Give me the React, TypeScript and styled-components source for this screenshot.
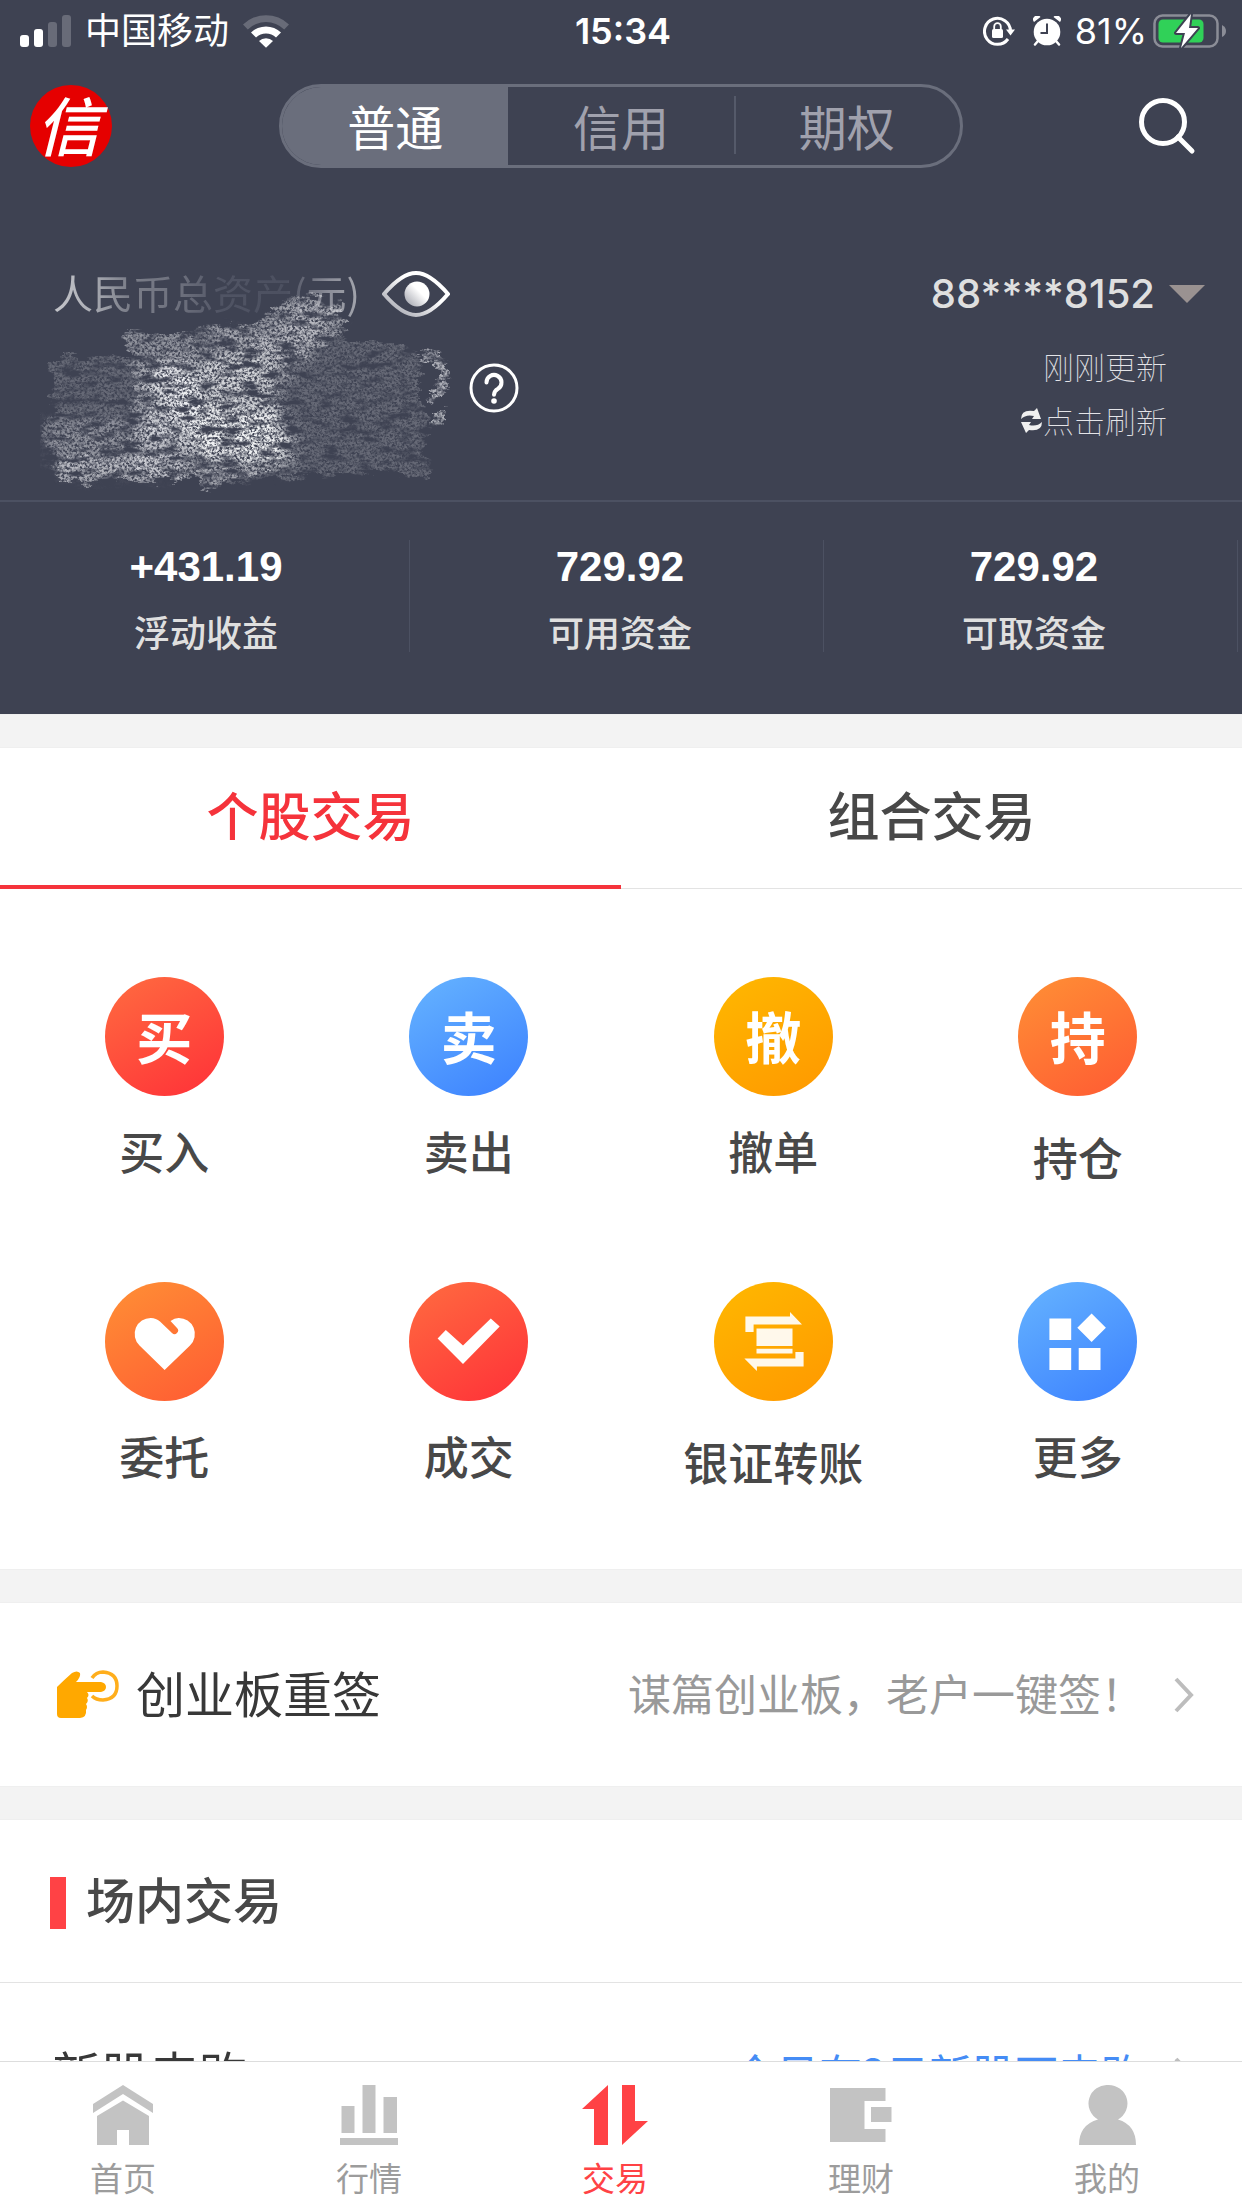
import React, { useState } from "react";
import styled, { createGlobalStyle, css } from "styled-components";

const color = {
  night: "#3e4252",
  nightLine: "#4c5162",
  pill: "#6a6e7c",
  red: "#f5333b",
  brand: "#ff4245",
  ink: "#484848",
  mute: "#999999",
  icon: "#c3c3c3",
  line: "#e3e3e3",
  band: "#f3f3f3",
  blue: "#458cf5",
};

const Global = createGlobalStyle`
  *, *::before, *::after { box-sizing: border-box; }
  html, body { margin: 0; background: #fff; }
  body { font-family: "Noto Sans CJK SC", sans-serif; color: ${color.ink}; }
  button { margin: 0; padding: 0; border: 0; background: none; color: inherit; font: inherit; cursor: pointer; }
  a { color: inherit; text-decoration: none; }
  h2, p, dl, dd, dt { margin: 0; }
  svg { display: block; flex: none; }
`;

const Shell = styled.div`
  display: flex;
  flex-direction: column;
  height: 100vh;
  overflow: hidden;
`;

const Content = styled.main`
  flex: 1;
  min-height: 0;
  overflow-y: auto;
  scrollbar-width: none;
`;

const Top = styled.header`
  background: ${color.night};
  color: #fff;
`;

/* status bar */

const StatusBar = styled.div`
  display: grid;
  grid-template-columns: 1fr auto 1fr;
  align-items: center;
  height: 62px;
  padding: 0 16px 0 20px;
  font-family: Inter, "Noto Sans CJK SC", sans-serif;
  font-size: 36px;
  line-height: 48px;
`;

const StatusSide = styled.div<{ $end?: boolean }>`
  display: flex;
  align-items: center;
  gap: ${(p) => (p.$end ? 6 : 14)}px;
  justify-content: ${(p) => (p.$end ? "flex-end" : "flex-start")};
`;

const StatusIcons = styled.span`
  display: flex;
  align-items: center;
  gap: 18px;
  margin-right: 8px;
`;

const Clock = styled.time`
  font-weight: 600;
`;

/* toolbar */

const Toolbar = styled.div`
  display: grid;
  grid-template-columns: 1fr 55vw 1fr;
  align-items: center;
  padding: 22px 30px 0;
`;

const Logo = styled.a`
  display: flex;
  align-items: center;
  justify-content: center;
  width: 82px;
  height: 82px;
  padding: 0 6px 6px 0;
  border-radius: 50%;
  background: #e50000;
  font-size: 64px;
  line-height: 76px;
  font-style: italic;
  font-weight: 500;
`;

const Segments = styled.div`
  display: grid;
  grid-template-columns: repeat(3, 1fr);
  height: 84px;
  border: 3px solid ${color.pill};
  border-radius: 42px;
  overflow: hidden;
`;

const Segment = styled.button<{ $active: boolean }>`
  display: flex;
  align-items: center;
  justify-content: center;
  padding-bottom: 2px;
  font-size: 48px;
  line-height: 56px;
  color: ${(p) => (p.$active ? "#fff" : "#a0a1ad")};
  background: ${(p) => (p.$active ? color.pill : "none")};

  & + &::before {
    content: "";
    width: 2px;
    height: 58px;
    margin-right: auto;
    background: #555a6a;
  }
  & + &::after {
    content: "";
    width: 2px;
    margin-left: auto;
  }
`;

const SearchButton = styled.button`
  justify-self: end;
  padding-right: 16px;
`;

/* account summary */

const Account = styled.section`
  position: relative;
  display: flex;
  justify-content: space-between;
  padding: 102px 37px 53px 53px;
  border-bottom: 2px solid ${color.nightLine};
`;

const Assets = styled.div`
  display: flex;
  flex-direction: column;
  gap: 45px;
`;

const AssetsTitle = styled.div`
  display: flex;
  align-items: center;
  gap: 22px;
  height: 48px;
  font-size: 40px;
  line-height: 48px;
`;

const FadedText = styled.span`
  padding-bottom: 5px;
  color: transparent;
  background: linear-gradient(
    90deg,
    #c4c5ca 0,
    #aeb0b7 12%,
    #7c7f8a 24%,
    #6c6f7c 42%,
    #505464 55%,
    #4c5060 76%,
    #8c8e99 90%,
    #a4a6ae 100%
  );
  background-clip: text;
  -webkit-background-clip: text;
`;

const HelpButton = styled.button`
  align-self: flex-end;
  margin-right: -69px;
`;

const Scribble = styled.svg`
  position: absolute;
  left: 40px;
  top: 102px;
  pointer-events: none;
`;

const AccountSide = styled.div`
  display: flex;
  flex-direction: column;
  align-items: flex-end;
`;

const AccountPicker = styled.button`
  display: flex;
  align-items: center;
  gap: 14px;
  margin-bottom: 21px;
  font-family: Inter, sans-serif;
  font-size: 40px;
  line-height: 48px;
  font-weight: 500;
  color: #dfdfdf;
`;

const Refresh = styled.div`
  display: flex;
  align-items: center;
  margin-right: 38px;
  font-size: 31px;
  line-height: 54px;
  font-weight: 100;
  color: #e4e4e8;
`;

const RefreshButton = styled(Refresh).attrs({ as: "button" })``;

const Stats = styled.dl`
  display: grid;
  grid-template-columns: repeat(3, 1fr);
  padding: 38px 0 62px;
`;

const Stat = styled.div`
  display: flex;
  flex-direction: column-reverse;
  gap: 19px;
  margin-right: 4px;
  padding: 0 0 2px 3px;
  border-right: 1px solid ${color.nightLine};
  text-align: center;
`;

const StatValue = styled.dd`
  font-family: "Liberation Sans", Arial, sans-serif;
  font-size: 42px;
  line-height: 53px;
  font-weight: 700;
`;

const StatLabel = styled.dt`
  font-size: 36px;
  line-height: 38px;
  font-weight: 500;
  color: #dfdfdf;
`;

/* body */

const Band = styled.div`
  height: 34px;
  background: ${color.band};
  border: solid #efefef;
  border-width: 1px 0;
`;

const Tabs = styled.div`
  display: grid;
  grid-template-columns: repeat(2, 1fr);
`;

const Tab = styled.button<{ $active: boolean }>`
  height: 141px;
  padding-bottom: 8px;
  border-bottom: 1px solid ${color.line};
  font-size: 52px;
  line-height: 60px;
  font-weight: 500;
  ${(p) =>
    p.$active &&
    css`
      padding-bottom: 5px;
      color: ${color.red};
      border-bottom: 4px solid ${color.red};
    `}
`;

const Shortcuts = styled.nav`
  display: grid;
  grid-template-columns: repeat(4, 1fr);
  gap: 86px 0;
  padding: 88px 12px 68px;
`;

const Shortcut = styled.a<{ $spaced?: boolean }>`
  display: flex;
  flex-direction: column;
  align-items: center;
  gap: ${(p) => (p.$spaced ? 33 : 27)}px;
  height: 219px;
  font-size: 45px;
  line-height: 56px;
  font-weight: 500;
  white-space: nowrap;
`;

const tones = {
  red: "#ff6c40, #ff3038",
  blue: "#66b4ff, #3b80ff",
  yellow: "#ffb800, #ff9800",
  orange: "#ff9035, #ff5a33",
};

type Tone = keyof typeof tones;

const Disc = styled.span<{ $tone: Tone }>`
  display: flex;
  align-items: center;
  justify-content: center;
  width: 119px;
  height: 119px;
  border-radius: 50%;
  background: linear-gradient(150deg, ${(p) => tones[p.$tone]});
  color: #fff;
`;

const DiscText = styled.span`
  padding-bottom: 4px;
  font-size: 56px;
  line-height: 64px;
  font-weight: 700;
`;

const Row = styled.a`
  display: flex;
  align-items: center;
  height: 183px;
  padding: 0 48px 0 52px;
`;

const RowTitle = styled.span`
  padding-bottom: 6px;
  font-size: 49px;
  line-height: 60px;
  color: #383838;

  svg + & {
    margin-left: 14px;
  }
`;

const RowNote = styled.span<{ $link?: boolean }>`
  margin-left: auto;
  margin-right: 30px;
  padding-bottom: 6px;
  font-size: 43px;
  line-height: 60px;
  color: ${(p) => (p.$link ? color.blue : color.mute)};
`;

const SectionHead = styled.div`
  display: flex;
  align-items: center;
  gap: 20px;
  height: 163px;
  padding: 4px 50px 0;
  border-bottom: 1px solid ${color.line};

  &::before {
    content: "";
    width: 16px;
    height: 52px;
    background: ${color.brand};
  }
`;

const SectionTitle = styled.h2`
  padding-bottom: 10px;
  font-size: 49px;
  line-height: 60px;
  font-weight: 500;
`;

/* bottom navigation */

const BottomNav = styled.nav`
  display: grid;
  grid-template-columns: repeat(5, 1fr);
  height: 147px;
  padding-right: 12px;
  border-top: 1px solid #dddddd;
  background: #fff;
`;

const NavItem = styled.a<{ $active?: boolean }>`
  display: flex;
  flex-direction: column;
  align-items: center;
  gap: 11px;
  padding-top: 23px;
  font-size: 33px;
  line-height: 42px;
  color: ${(p) => (p.$active ? color.brand : "#9c9c9c")};

  svg {
    fill: ${(p) => (p.$active ? color.brand : color.icon)};
  }
`;

const SignalIcon = () => (
  <svg width="51" height="32" viewBox="0 0 51 32" fill="#fff" aria-hidden="true">
    <rect x="0" y="20" width="9" height="12" rx="3" />
    <rect x="14" y="14" width="9" height="18" rx="3" />
    <rect x="28" y="7" width="9" height="25" rx="3" opacity=".22" />
    <rect x="42" y="0" width="9" height="32" rx="3" opacity=".22" />
  </svg>
);

const WifiIcon = () => (
  <svg width="46" height="34" viewBox="0 0 46 34" aria-hidden="true">
    <path d="M0 10.500a33 33 0 0 1 46 0l-4.800 5a26 26 0 0 0-36.400 0z" fill="#fff" opacity=".22" />
    <path d="M8 18.500a21.500 21.500 0 0 1 30 0l-5 5a14.500 14.500 0 0 0-20 0z" fill="#fff" />
    <path d="M16 27a10 10 0 0 1 14 0l-7 6.800z" fill="#fff" />
  </svg>
);

const LockIcon = () => (
  <svg width="32" height="30" viewBox="0 0 32 30" aria-hidden="true">
    <path d="M27.500 15A13 13 0 1 0 25 23" fill="none" stroke="#fff" strokeWidth="3" />
    <path d="M23 13.500h9l-4.500 6z" fill="#fff" />
    <rect x="9" y="13" width="11" height="9" rx="1.500" fill="#fff" />
    <path d="M11.200 13.500v-3a3.300 3.300 0 0 1 6.600 0v3" fill="none" stroke="#fff" strokeWidth="1.800" />
  </svg>
);

const AlarmIcon = () => (
  <svg width="28" height="30" viewBox="0 0 28 30" aria-hidden="true">
    <g stroke="#fff" strokeWidth="2.500" strokeLinecap="round">
      <path d="M5 25l-3 3.500M23 25l3 3.500" />
    </g>
    <path d="M1 6a4 4 0 0 1 6.500-5zM27 6a4 4 0 0 0-6.500-5z" fill="#fff" />
    <circle cx="14" cy="16" r="13.300" fill="#fff" />
    <path d="M14 7.500v9.500H7.500" fill="none" stroke={color.night} strokeWidth="2" />
  </svg>
);

const BatteryIcon = () => (
  <svg width="73" height="36" viewBox="0 0 73 36" aria-hidden="true">
    <rect x="1.500" y="2.500" width="63" height="31" rx="8" fill="none" stroke="#8b8d97" strokeWidth="2.500" />
    <path d="M69 12q4 2 4 6t-4 6z" fill="#8b8d97" />
    <rect x="5.500" y="6.500" width="45" height="23" rx="4.500" fill="#30d158" />
    <path
      d="M38 1L23 20h9l-4 15 17-20h-9z"
      fill="#fff"
      stroke={color.night}
      strokeWidth="4"
      strokeLinejoin="round"
      paintOrder="stroke"
    />
  </svg>
);

const SearchIcon = () => (
  <svg width="58" height="58" viewBox="0 0 58 58" fill="none" stroke="#fff" strokeWidth="5" strokeLinecap="round" aria-hidden="true">
    <circle cx="25" cy="25" r="21.500" />
    <path d="M40 40l14 14" />
  </svg>
);

const EyeIcon = () => (
  <svg width="68" height="46" viewBox="0 0 68 46" aria-hidden="true">
    <defs>
      <linearGradient id="eyeLine" x1="0" y1="1" x2="1" y2="0">
        <stop offset="0" stopColor="#9a9ca6" />
        <stop offset=".6" stopColor="#fff" />
      </linearGradient>
    </defs>
    <path
      d="M2 23Q20 2 34 2t32 21Q48 44 34 44T2 23z"
      fill="none"
      stroke="url(#eyeLine)"
      strokeWidth="4"
      strokeLinejoin="round"
    />
    <circle cx="35" cy="23" r="12.500" fill="url(#eyeLine)" />
  </svg>
);

const HelpIcon = () => (
  <svg width="50" height="50" viewBox="0 0 50 50" fill="none" stroke="#fff" aria-hidden="true">
    <circle cx="25" cy="25" r="23" strokeWidth="3" />
    <path d="M17.500 19.500a7.500 7.500 0 1 1 11.500 6.300q-4 2.400-4 6" strokeWidth="4" strokeLinecap="round" />
    <circle cx="25" cy="38" r="2.800" fill="#fff" stroke="none" />
  </svg>
);

const RefreshIcon = () => (
  <svg width="23" height="25" viewBox="0 0 23 25" fill="#f0f0f0" aria-hidden="true">
    <path d="M1 11Q1 1 14 3l3-3 4 11h-9l2-3Q6 6 1 11z" />
    <path d="M22 14q0 10-13 8l-3 3L1 14h10l-2 3q8 2 13-3z" />
  </svg>
);

const CaretIcon = () => (
  <svg width="36" height="18" viewBox="0 0 36 18" aria-hidden="true">
    <path d="M0 0h36L18 18z" fill="#9a9291" />
  </svg>
);

const ScribbleMask = () => (
  <Scribble width="420" height="228" viewBox="0 0 420 228" aria-hidden="true">
    <defs>
      <filter id="chalk" x="-5%" y="-5%" width="110%" height="110%">
        <feTurbulence type="fractalNoise" baseFrequency=".05 .14" numOctaves="4" seed="3" result="waves" />
        <feTurbulence type="fractalNoise" baseFrequency=".4" numOctaves="4" seed="7" result="grain" />
        <feDisplacementMap in="SourceGraphic" in2="waves" scale="20" xChannelSelector="R" yChannelSelector="G" result="rough" />
        <feColorMatrix in="grain" type="matrix" values="0 0 0 0 1  0 0 0 0 1  0 0 0 0 1  3 0 0 0 -.850" result="speck" />
        <feColorMatrix in="waves" type="matrix" values="0 0 0 0 1  0 0 0 0 1  0 0 0 0 1  0 0 3.500 0 -.900" result="patches" />
        <feComposite in="rough" in2="speck" operator="in" result="chalked" />
        <feComposite in="chalked" in2="patches" operator="in" />
      </filter>
      <filter id="melt">
        <feGaussianBlur stdDeviation="7" />
      </filter>
    </defs>
    <g filter="url(#chalk)" fill="#f4f5f7">
      <path d="M10 88h80v-25h66l2-8h55l40-28 46 4 5 42h56l20 16v40l10 30-8 18 10 30-64-6-75 6-85 10-8-8H17L6 180 1 148h14z" opacity=".22" />
      <path d="M86 63h68v20l8 40-12 88-56-6V110z" opacity=".3" />
      <path d="M156 56h55l42-30 46 6 4 30-54 30z" opacity=".3" />
      <path d="M17 186h130v25H17z" opacity=".4" />
      <path d="M156 198l80-4-62 24-14 2z" opacity=".4" />
      <g filter="url(#melt)">
        <path d="M160 66h60l40-30 36 6-30 46-24 24-60 30-20-40z" opacity=".4" />
        <path d="M6 150h124v54H17L6 180z" opacity=".3" />
        <path d="M104 96l80-10 46-4 10 54 15 34-4 28-87-8-58-20z" opacity=".6" />
        <path d="M150 138l82 4 14 30-5 20-84-4z" opacity=".95" />
        <path d="M110 100h44l14 50-34 6z" opacity=".8" />
      </g>
      <path d="M390 141h17v12h-17z" opacity=".6" />
      <path d="M380 85q24 0 24 20 0 14-16 22" fill="none" stroke="#e9eaee" strokeWidth="11" opacity=".65" />
    </g>
  </Scribble>
);

const HeartGlyph = () => (
  <svg width="119" height="119" viewBox="0 0 119 119" fill="#fff" aria-hidden="true">
    <path d="M59.600 88L34.500 63.500A16 16 0 0 1 46 36q5 0 9 3.500L67 51a3 3 0 0 0 5-5l-6.500-7q4-3 8-3A16 16 0 0 1 85 63.500z" />
  </svg>
);

const CheckGlyph = () => (
  <svg width="119" height="119" viewBox="0 0 119 119" fill="#fff" aria-hidden="true">
    <path d="M28.600 56.400l8.200-8.500L54 63.600l27.800-27.200 8.900 8.200L54 82z" />
  </svg>
);

const TransferGlyph = () => (
  <svg width="119" height="119" viewBox="0 0 119 119" fill="#fff" fillOpacity=".92" aria-hidden="true">
    <path d="M31.400 34.600H76V30l12 12.500H39.600V50h-8.200z" />
    <path d="M42.500 46.400h36V64h-36zM42.500 66.800h36v4.600h-36z" />
    <path d="M30.400 76.400h51V70h8.200v14.600H42.900V89z" />
  </svg>
);

const MoreGlyph = () => (
  <svg width="119" height="119" viewBox="0 0 119 119" fill="#fff" aria-hidden="true">
    <path d="M31.400 36.400h21.800v21.500H31.400zM31.400 66h21.800v21.900H31.400zM60.700 66h21.800v21.900H60.700zM73.600 31.400l14.300 14.300L73.600 60 59.300 45.700z" />
  </svg>
);

const PointerIcon = () => (
  <svg width="70" height="50" viewBox="0 0 70 50" aria-hidden="true">
    <path
      d="M5 17Q12 10 20 3q5-3 8 0 1 4-4 9h25q5 1 5 5t-5 5H35q3 3 0 6 2 3-1 6 2 3 0 6 1 7-6 8H9q-4 0-4-4z"
      fill="#ffa800"
    />
    <path d="M40 8q4-6 11-6 14 1 14 14T51 30q-7 0-11-4" fill="none" stroke="#ffae1c" strokeWidth="3.500" />
  </svg>
);

const ChevronIcon = () => (
  <svg width="20" height="36" viewBox="0 0 20 36" fill="none" stroke="#bdbdbd" strokeWidth="4" aria-hidden="true">
    <path d="M2 2l15 16L2 34" />
  </svg>
);

const HomeIcon = () => (
  <svg width="60" height="60" viewBox="0 0 60 60" aria-hidden="true">
    <path d="M0 19L30 0l30 19v9L30 9 0 28z" />
    <path d="M4 31l26-15.500L56 31v29H36V45H24v15H4z" />
  </svg>
);

const ChartIcon = () => (
  <svg width="58" height="60" viewBox="0 0 58 60" aria-hidden="true">
    <path d="M1.500 21h13v27h-13zM22.500 0h13v48h-13zM43.500 12H57v36H43.500zM0 53h58v7H0z" />
  </svg>
);

const TradeIcon = () => (
  <svg width="66" height="60" viewBox="0 0 66 60" aria-hidden="true">
    <path d="M0 24L26 0v60H12V24zM40 0h13v36h13L40 60z" />
  </svg>
);

const WalletIcon = () => (
  <svg width="62" height="60" viewBox="0 0 62 60" aria-hidden="true">
    <path d="M0 3h55.500v13h-21v28h21v13H0zM41 22h20.500v15H41z" />
  </svg>
);

const PersonIcon = () => (
  <svg width="57" height="60" viewBox="0 0 57 60" aria-hidden="true">
    <path d="M29.500 0a19 18.500 0 0 1 9.500 34.500Q57 40 57 60H0q0-20 19-25.500A19 18.500 0 0 1 29.500 0z" />
  </svg>
);

const segments = ["普通", "信用", "期权"];
const tabs = ["个股交易", "组合交易"];

const stats = [
  { label: "浮动收益", value: "+431.19" },
  { label: "可用资金", value: "729.92" },
  { label: "可取资金", value: "729.92" },
];

const shortcuts: { label: string; tone: Tone; glyph: React.ReactNode; spaced?: boolean }[] = [
  { label: "买入", tone: "red", glyph: <DiscText>买</DiscText> },
  { label: "卖出", tone: "blue", glyph: <DiscText>卖</DiscText> },
  { label: "撤单", tone: "yellow", glyph: <DiscText>撤</DiscText> },
  { label: "持仓", tone: "orange", glyph: <DiscText>持</DiscText>, spaced: true },
  { label: "委托", tone: "orange", glyph: <HeartGlyph /> },
  { label: "成交", tone: "red", glyph: <CheckGlyph /> },
  { label: "银证转账", tone: "yellow", glyph: <TransferGlyph />, spaced: true },
  { label: "更多", tone: "blue", glyph: <MoreGlyph /> },
];

const navItems = [
  { label: "首页", icon: <HomeIcon /> },
  { label: "行情", icon: <ChartIcon /> },
  { label: "交易", icon: <TradeIcon />, active: true },
  { label: "理财", icon: <WalletIcon /> },
  { label: "我的", icon: <PersonIcon /> },
];

export default function App() {
  const [segment, setSegment] = useState(0);
  const [tab, setTab] = useState(0);

  return (
    <Shell>
      <Global />
      <Content>
        <Top>
          <StatusBar>
            <StatusSide>
              <SignalIcon />
              <span>中国移动</span>
              <WifiIcon />
            </StatusSide>
            <Clock>15:34</Clock>
            <StatusSide $end>
              <StatusIcons>
                <LockIcon />
                <AlarmIcon />
              </StatusIcons>
              <span>81%</span>
              <BatteryIcon />
            </StatusSide>
          </StatusBar>

          <Toolbar>
            <Logo href="#">信</Logo>
            <Segments role="tablist">
              {segments.map((name, i) => (
                <Segment key={name} role="tab" aria-selected={i === segment} $active={i === segment} onClick={() => setSegment(i)}>
                  {name}
                </Segment>
              ))}
            </Segments>
            <SearchButton aria-label="搜索">
              <SearchIcon />
            </SearchButton>
          </Toolbar>

          <Account>
            <Assets>
              <AssetsTitle>
                <FadedText>人民币总资产(元)</FadedText>
                <button aria-label="显示或隐藏资产">
                  <EyeIcon />
                </button>
              </AssetsTitle>
              <HelpButton aria-label="帮助">
                <HelpIcon />
              </HelpButton>
            </Assets>
            <AccountSide>
              <AccountPicker aria-haspopup="listbox">
                88****8152
                <CaretIcon />
              </AccountPicker>
              <Refresh>刚刚更新</Refresh>
              <RefreshButton>
                <RefreshIcon />
                点击刷新
              </RefreshButton>
            </AccountSide>
            <ScribbleMask />
          </Account>

          <Stats>
            {stats.map((s) => (
              <Stat key={s.label}>
                <StatLabel>{s.label}</StatLabel>
                <StatValue>{s.value}</StatValue>
              </Stat>
            ))}
          </Stats>
        </Top>

        <Band />
        <Tabs role="tablist">
          {tabs.map((name, i) => (
            <Tab key={name} role="tab" aria-selected={i === tab} $active={i === tab} onClick={() => setTab(i)}>
              {name}
            </Tab>
          ))}
        </Tabs>
        <Shortcuts>
          {shortcuts.map((s) => (
            <Shortcut key={s.label} href="#" $spaced={s.spaced}>
              <Disc $tone={s.tone}>{s.glyph}</Disc>
              {s.label}
            </Shortcut>
          ))}
        </Shortcuts>

        <Band />
        <Row href="#">
          <PointerIcon />
          <RowTitle>创业板重签</RowTitle>
          <RowNote>谋篇创业板，老户一键签！</RowNote>
          <ChevronIcon />
        </Row>
        <Band />

        <SectionHead>
          <SectionTitle>场内交易</SectionTitle>
        </SectionHead>
        <Row href="#">
          <RowTitle>新股申购</RowTitle>
          <RowNote $link>今日有2只新股可申购</RowNote>
          <ChevronIcon />
        </Row>
      </Content>

      <BottomNav>
        {navItems.map((n) => (
          <NavItem key={n.label} href="#" $active={n.active}>
            {n.icon}
            {n.label}
          </NavItem>
        ))}
      </BottomNav>
    </Shell>
  );
}
